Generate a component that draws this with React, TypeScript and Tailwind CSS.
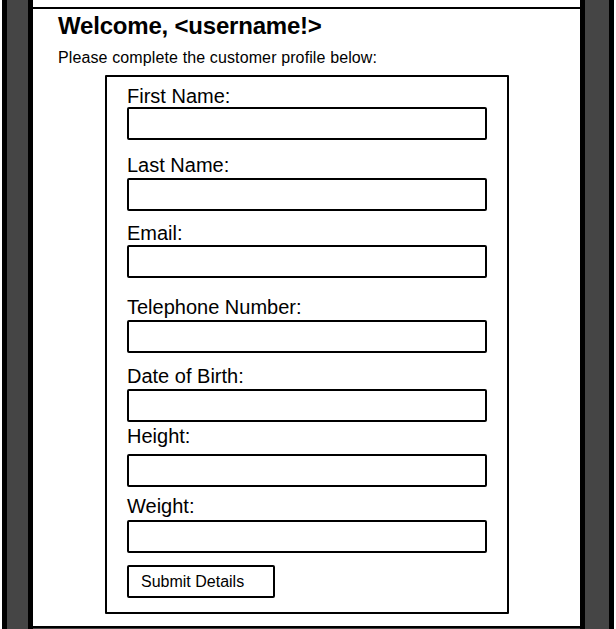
import React from "react";

const fields: { label: string; lt: string; it: string }[] = [
  { label: "First Name:", lt: "mt-[9px]", it: "mt-[1px]" },
  { label: "Last Name:", lt: "mt-[15px]", it: "mt-[3px]" },
  { label: "Email:", lt: "mt-[12px]", it: "mt-[2px]" },
  { label: "Telephone Number:", lt: "mt-[19px]", it: "mt-[3px]" },
  { label: "Date of Birth:", lt: "mt-[13px]", it: "mt-[3px]" },
  { label: "Height:", lt: "mt-[4px]", it: "mt-[8px]" },
  { label: "Weight:", lt: "mt-[9px]", it: "mt-[4px]" },
];

export default function App() {
  return (
    <div
      className="w-[616px] h-[629px] bg-white flex overflow-hidden text-black"
      style={{ fontFamily: '"Liberation Sans", Arial, sans-serif' }}
    >
      {/* left bezel */}
      <div className="ml-[2px] w-[31px] h-full bg-[#454545] border-x-[5px] border-black" />

      {/* content */}
      <div className="w-[547px] h-full flex flex-col bg-white">
        <div className="h-[9px] border-b-2 border-black bg-white" />
        <div className="pl-[25px]">
          <h1 className="mt-[3px] text-[24px] leading-[28px] font-bold tracking-[-0.2px]">
            Welcome, &lt;username!&gt;
          </h1>
          <p className="mt-[8px] text-[16px] leading-[20px] tracking-[0.12px]">
            Please complete the customer profile below:
          </p>
        </div>
        <div className="ml-[72px] mt-[7px] w-[404px] border-2 border-black rounded-[1px] pl-[20px] pb-[14px] flex flex-col">
          {fields.map((f) => (
            <React.Fragment key={f.label}>
              <label className={`${f.lt} block text-[20px] leading-[20px]`}>{f.label}</label>
              <div
                className={`${f.it} w-[360px] h-[33px] border-2 border-black rounded-[2px] bg-white`}
              />
            </React.Fragment>
          ))}
          <button className="mt-[12px] w-[148px] h-[33px] border-2 border-black rounded-[2px] bg-white text-left pl-[12px] text-[16px] leading-[20px]">
            Submit Details
          </button>
        </div>
        <div className="flex-1" />
        <div className="h-[3px] border-t-2 border-black bg-[#454545]" />
      </div>

      {/* right bezel */}
      <div className="w-[34px] h-full bg-[#454545] border-x-[5px] border-black" />
    </div>
  );
}
